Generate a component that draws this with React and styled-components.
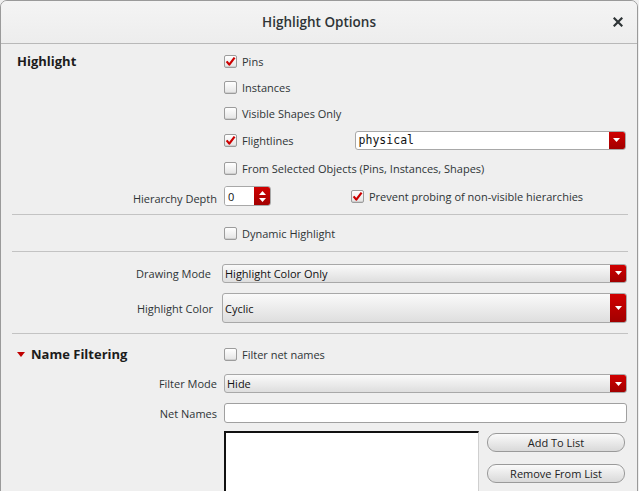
import React from "react";
import styled, { createGlobalStyle } from "styled-components";

const Global = createGlobalStyle`
  html, body { margin: 0; padding: 0; background: #efefef; overflow: hidden; }
  body { font-family: "Open Sans", "DejaVu Sans", sans-serif; font-size: 11px; color: #2e3436; }
`;

const Window = styled.div`
  width: 636px;
  height: 500px;
  border: 1px solid #9a9a9a;
  border-radius: 7px 7px 0 0;
  background: #efefef;
  overflow: hidden;
  box-sizing: content-box;
`;

const TitleBar = styled.div`
  height: 42px;
  border-bottom: 1px solid #b8b8b8;
  background: linear-gradient(#f4f4f4, #ededed);
  display: flex;
  align-items: center;
  justify-content: center;
  position: relative;
`;

const Title = styled.div`
  font-size: 13.5px;
  font-weight: 600;
  color: #2e3436;
`;

const Close = styled.div`
  position: absolute;
  right: 12px;
  top: 14px;
  width: 14px;
  height: 14px;
  display: flex;
  align-items: center;
  justify-content: center;
`;

const Body = styled.div`
  padding: 4px 10px 0 10px;
`;

const Row = styled.div`
  display: grid;
  grid-template-columns: 206px 1fr;
  column-gap: 7px;
  align-items: center;
  height: ${(p) => p.$h}px;
  margin-top: ${(p) => p.$mt || 0}px;
`;

const Label = styled.div`
  text-align: right;
  white-space: nowrap;
  padding-top: ${(p) => p.$pt || 0}px;
  padding-right: ${(p) => p.$pr || 0}px;
`;

const Heading = styled.div`
  font-size: 13px;
  font-weight: 700;
  color: #1c1c1c;
  padding-left: 6px;
  display: flex;
  align-items: center;
  gap: 6px;
`;

const Cell = styled.div`
  display: flex;
  align-items: center;
  min-width: 0;
  margin-left: ${(p) => p.$ml || 0}px;
`;

const Separator = styled.div`
  height: 1px;
  background: #c3c3c3;
  margin: ${(p) => p.$m};
  width: 616px;
  margin-left: 1px;
`;

const CheckWrap = styled.label`
  display: inline-flex;
  align-items: center;
  gap: 5px;
  white-space: nowrap;
  margin-left: ${(p) => p.$ml || 0}px;
`;

const Box = styled.span`
  width: 11px;
  height: 11px;
  border: 1px solid #9c9c9c;
  border-radius: 2px;
  background: linear-gradient(#ffffff, #e4e4e4);
  box-shadow: inset 0 -1px 0 #cfcfcf;
  display: inline-flex;
  align-items: center;
  justify-content: center;
  flex: none;
`;

function Check({ checked, children, ml }) {
  return (
    <CheckWrap $ml={ml}>
      <Box>
        {checked && (
          <svg width="11" height="11" viewBox="0 0 11 11">
            <path d="M1.6 5.4 L4.3 8.6 L9.6 1.6" fill="none" stroke="#cc0000" strokeWidth="2.2" strokeLinejoin="round" />
          </svg>
        )}
      </Box>
      <span>{children}</span>
    </CheckWrap>
  );
}

const Combo = styled.div`
  display: flex;
  align-items: stretch;
  height: ${(p) => p.$h}px;
  width: ${(p) => (p.$w ? p.$w + "px" : "100%")};
  margin-left: ${(p) => p.$ml || 0}px;
  border: 1px solid #a8a8a8;
  border-radius: 3px;
  box-sizing: border-box;
  background: ${(p) => (p.$white ? "#ffffff" : "linear-gradient(#fafafa, #dedede)")};
  overflow: hidden;
`;

const ComboText = styled.div`
  flex: 1;
  display: flex;
  align-items: center;
  padding-left: ${(p) => (p.$mono ? 3 : 2)}px;
  font-family: ${(p) => (p.$mono ? '"DejaVu Sans Mono", "Liberation Mono", monospace' : "inherit")};
  font-size: ${(p) => (p.$mono ? 11.5 : 11)}px;
  color: #111;
`;

const RedButton = styled.div`
  width: ${(p) => p.$w || 16}px;
  background: linear-gradient(#d00000, #a20000);
  display: flex;
  flex-direction: column;
  align-items: center;
  justify-content: center;
  gap: 3px;
  flex: none;
`;

function DownArrow() {
  return (
    <svg width="7" height="4" viewBox="0 0 7 4">
      <path d="M0 0 H7 L3.5 4 Z" fill="#ffffff" />
    </svg>
  );
}
function UpArrow() {
  return (
    <svg width="7" height="4" viewBox="0 0 7 4">
      <path d="M0 4 H7 L3.5 0 Z" fill="#ffffff" />
    </svg>
  );
}

function Dropdown({ value, h = 19, w, ml, white, mono }) {
  return (
    <Combo $h={h} $w={w} $ml={ml} $white={white}>
      <ComboText $mono={mono}>{value}</ComboText>
      <RedButton>
        <DownArrow />
      </RedButton>
    </Combo>
  );
}

const SpinText = styled.div`
  width: 29px;
  display: flex;
  align-items: center;
  padding-left: 3px;
  background: #fff;
  color: #111;
`;

const TextInput = styled.div`
  width: 100%;
  height: 20px;
  border: 1px solid #a0a0a0;
  border-radius: 3px;
  background: #fff;
  box-sizing: border-box;
`;

const ListArea = styled.div`
  display: grid;
  grid-template-columns: 255px 1fr;
  column-gap: 8px;
  margin-left: 213px;
  margin-top: 8px;
`;

const ListBox = styled.div`
  height: 80px;
  background: #fff;
  border-top: 2px solid #111;
  border-left: 2px solid #111;
  border-right: 1px solid #cfcfcf;
  box-sizing: border-box;
`;

const Buttons = styled.div`
  display: flex;
  flex-direction: column;
  gap: 12px;
  padding-top: 2px;
  padding-right: 2px;
`;

const PillButton = styled.div`
  height: 19px;
  border: 1px solid #9a9a9a;
  border-radius: 9px;
  background: linear-gradient(#fafafa, #d9d9d9);
  display: flex;
  align-items: center;
  justify-content: center;
  color: #222;
  box-sizing: border-box;
`;

const Triangle = styled.span`
  width: 0;
  height: 0;
  border-left: 4px solid transparent;
  border-right: 4px solid transparent;
  border-top: 5px solid #c00000;
`;

export default function App() {
  return (
    <>
      <Global />
      <Window>
        <TitleBar>
          <Title>Highlight Options</Title>
          <Close>
            <svg width="10" height="10" viewBox="0 0 10 10">
              <path d="M1.5 1.5 L8.5 8.5 M8.5 1.5 L1.5 8.5" stroke="#2e3436" strokeWidth="2.2" strokeLinecap="square" />
            </svg>
          </Close>
        </TitleBar>
        <Body>
          <Row $h={26}>
            <Heading>Highlight</Heading>
            <Cell><Check checked>Pins</Check></Cell>
          </Row>
          <Row $h={27}>
            <div />
            <Cell><Check>Instances</Check></Cell>
          </Row>
          <Row $h={25}>
            <div />
            <Cell><Check>Visible Shapes Only</Check></Cell>
          </Row>
          <Row $h={28}>
            <div />
            <Cell>
              <Check checked>Flightlines</Check>
              <Dropdown value="physical" white mono w={271} ml={61} />
            </Cell>
          </Row>
          <Row $h={28}>
            <div />
            <Cell><Check>From Selected Objects (Pins, Instances, Shapes)</Check></Cell>
          </Row>
          <Row $h={28}>
            <Label $pt={4}>Hierarchy Depth</Label>
            <Cell>
              <Combo $h={20} $w={47} $white>
                <SpinText>0</SpinText>
                <RedButton $w={16}>
                  <UpArrow />
                  <DownArrow />
                </RedButton>
              </Combo>
              <Check checked ml={80}>Prevent probing of non-visible hierarchies</Check>
            </Cell>
          </Row>
          <Separator $m="4px 0 0 0" />
          <Row $h={36}>
            <div />
            <Cell><Check>Dynamic Highlight</Check></Cell>
          </Row>
          <Separator $m="0" />
          <Row $h={20} $mt={11}>
            <Label $pr={6}>Drawing Mode</Label>
            <Cell $ml={-2}><Dropdown value="Highlight Color Only" /></Cell>
          </Row>
          <Row $h={30} $mt={10}>
            <Label $pr={4}>Highlight Color</Label>
            <Cell $ml={-2}><Dropdown value="Cyclic" h={30} /></Cell>
          </Row>
          <Separator $m="10px 0 0 0" />
          <Row $h={40}>
            <Heading><Triangle />Name Filtering</Heading>
            <Cell><Check>Filter net names</Check></Cell>
          </Row>
          <Row $h={19}>
            <Label>Filter Mode</Label>
            <Cell><Dropdown value="Hide" /></Cell>
          </Row>
          <Row $h={20} $mt={10}>
            <Label>Net Names</Label>
            <Cell><TextInput /></Cell>
          </Row>
          <ListArea>
            <ListBox />
            <Buttons>
              <PillButton>Add To List</PillButton>
              <PillButton>Remove From List</PillButton>
            </Buttons>
          </ListArea>
        </Body>
      </Window>
    </>
  );
}
